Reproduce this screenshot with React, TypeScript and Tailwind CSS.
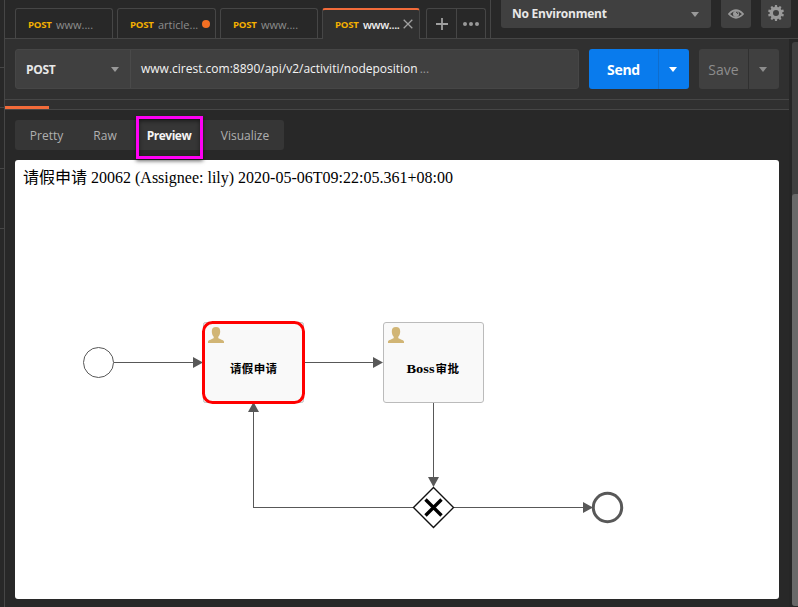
import React from "react";

function Caret({ className = "" }: { className?: string }) {
  return (
    <svg width="8" height="5" viewBox="0 0 8 5" className={`shrink-0 ${className}`}>
      <path d="M0 0H8L4 5Z" fill="currentColor" />
    </svg>
  );
}

function Tab({ label, active, dirty }: { label: string; active?: boolean; dirty?: boolean }) {
  return (
    <div
      className={`relative flex shrink-0 items-center rounded-t-[3px] border border-b-0 border-[#464646] pl-3 ${
        dirty ? "w-[99px]" : "w-[98px]"
      } ${active ? "h-[31px] border-t-2 border-t-[#f26b3a] bg-[#303030]" : "h-[30px] bg-[#282828] pt-[2px]"}`}
    >
      <span className="w-[28px] text-[9.6px] font-bold leading-4 tracking-[-0.25px] text-[#f5b000]">POST</span>
      <span className={`whitespace-nowrap text-[11px] leading-4 ${active ? "font-semibold tracking-[-0.35px] text-[#f0f0f0]" : "text-[#8d8d8d]"}`}>
        {label}
      </span>
      {dirty && <span className="absolute right-[5px] top-[11px] size-2 rounded-full bg-[#f47023]" />}
      {active && (
        <svg width="10" height="10" viewBox="0 0 10 10" className="absolute right-[6px] top-[9px]">
          <path d="M.7.7L9.3 9.3M9.3.7L.7 9.3" stroke="#a0a0a0" strokeWidth="1.3" />
        </svg>
      )}
    </div>
  );
}

function Gear() {
  return (
    <svg width="16" height="16" viewBox="-8 -8 16 16">
      <circle r="4.6" fill="none" stroke="#999" strokeWidth="3.2" />
      {[0, 36, 72, 108, 144, 180, 216, 252, 288, 324].map((a) => (
        <path key={a} d="M-1.4 -5.5L-1 -8H1L1.4 -5.5Z" fill="#999" transform={`rotate(${a})`} />
      ))}
    </svg>
  );
}

function Person({ x, y }: { x: number; y: number }) {
  return (
    <path
      transform={`translate(${x} ${y})`}
      d="M8 0C10.9 0 12.2 1.5 12.2 4.3C12.2 6.9 11.5 8.7 10.3 9.7V11C11.3 12.3 16 12.8 16 14.8V16H0V14.8C0 12.8 4.7 12.3 5.7 11V9.7C4.5 8.7 3.8 6.9 3.8 4.3C3.8 1.5 5.1 0 8 0Z"
      fill="#d1b575"
    />
  );
}

function Diagram() {
  return (
    <svg width="764" height="439" viewBox="15 160 764 439" className="absolute inset-0">
      <g fill="none" stroke="#585858" strokeWidth="1" shapeRendering="crispEdges">
        <path d="M114 362.5H194M304 362.5H374M433.5 403V478M454 507.5H583M413 507.5H253.5V411" />
      </g>
      <g fill="#585858">
        <path d="M193 357V368L203 362.5Z" />
        <path d="M373 357V368L383 362.5Z" />
        <path d="M428 477H439L433.5 487Z" />
        <path d="M583 502V513L593 507.5Z" />
        <path d="M248 412H259L253.5 402Z" />
      </g>
      <circle cx="98.5" cy="362.5" r="15" fill="#fff" stroke="#585858" />
      <circle cx="607.5" cy="507.5" r="14.2" fill="#fff" stroke="#585858" strokeWidth="3" />
      <rect x="203.5" y="322.5" width="100" height="80" rx="2" fill="#f9f9f9" stroke="#bbb" />
      <rect x="203.5" y="322.5" width="100" height="80" rx="9" fill="none" stroke="#f00" strokeWidth="3" />
      <rect x="383.5" y="322.5" width="100" height="80" rx="2.5" fill="#f9f9f9" stroke="#bbb" />
      <Person x={208} y={327} />
      <Person x={388} y={327} />
      <g fill="#000" fontWeight="700" fontSize="11.5" fontFamily="'Liberation Serif','Noto Sans CJK SC',serif">
        <text x="230" y="372.5" textLength="47">请假申请</text>
        <text x="406.5" y="372.5" textLength="28" lengthAdjust="spacingAndGlyphs" fontSize="12">Boss</text>
        <text x="435.5" y="372.5" textLength="23.5">审批</text>
      </g>
      <path d="M433.5 487.5L453.5 507.5L433.5 527.5L413.5 507.5Z" fill="#fff" stroke="#111" strokeWidth="1.4" />
      <path d="M425.5 499.5L441.5 515.5M441.5 499.5L425.5 515.5" stroke="#000" strokeWidth="3.4" />
    </svg>
  );
}

export default function App() {
  return (
    <div className="flex h-[607px] w-[798px] overflow-hidden bg-[#282828] font-['Open_Sans','Noto_Sans',sans-serif]">
      <aside className="flex w-[5px] shrink-0 flex-col border-r border-[#464646] bg-[#282828]">
        <div className="h-[68px] border-b border-[#464646]" />
        <div className="h-10 border-b border-[#464646]" />
        <div className="h-[61px] border-b border-[#464646]" />
        <div className="h-[60px] border-b border-[#464646]" />
      </aside>
      <div className="flex w-[793px] shrink-0 flex-col">
        <header className="flex h-[39px] shrink-0 border-b border-[#464646]">
          <div className="flex h-[39px] w-[486px] shrink-0 items-start border-r border-[#464646] pl-[10px] pt-2">
            <div className="flex">
              <div className="mr-1"><Tab label="www...." /></div>
              <div className="mr-1"><Tab label="article..." dirty /></div>
              <div className="mr-1"><Tab label="www...." /></div>
              <Tab label="www...." active />
            </div>
            <div className="ml-[6px] flex h-[30px] w-[60px] rounded-t-[3px] border border-b-0 border-[#464646] text-[#a0a0a0]">
              <div className="flex w-[30px] items-center justify-center border-r border-[#464646]">
                <svg width="12" height="12" viewBox="0 0 12 12"><path d="M6 0V12M0 6H12" stroke="currentColor" strokeWidth="1.8" /></svg>
              </div>
              <div className="flex flex-1 items-center justify-center gap-[2px]">
                <i className="size-1 rounded-full bg-[#999]" />
                <i className="size-1 rounded-full bg-[#999]" />
                <i className="size-1 rounded-full bg-[#999]" />
              </div>
            </div>
          </div>
          <div className="ml-[10px] flex h-7 gap-[10px] text-[#999]">
            <div className="flex w-[210px] items-center justify-between rounded-b-[3px] bg-[#404040] pl-[11px] pr-3">
              <span className="text-[12px] font-bold leading-4 tracking-[-0.25px] text-[#e8e8e8]">No Environment</span>
              <Caret />
            </div>
            <div className="flex w-[30px] items-center justify-center rounded-b-[3px] bg-[#404040]">
              <svg width="16" height="10" viewBox="0 0 16 10">
                <path d="M.9 5Q8-2.6 15.1 5Q8 12.6.9 5Z" fill="none" stroke="#999" strokeWidth="1.7" />
                <circle cx="8" cy="5" r="3" fill="#999" />
                <path d="M8 3.2A1.8 1.8 0 0 1 9.8 5" fill="none" stroke="#404040" />
              </svg>
            </div>
            <div className="flex w-[30px] items-center justify-center rounded-b-[3px] bg-[#404040] pb-[2px]"><Gear /></div>
          </div>
        </header>
        <div className="flex h-[568px]">
          <main className="w-[784px] shrink-0">
            <div className="flex h-[61px] items-start border-b border-[#464646] bg-[#303030] pl-[10px] pt-[10px]">
              <div className="flex h-10 w-[564px] rounded-[3px] border border-[#464646] bg-[#404040]">
                <div className="flex w-[115px] items-center justify-between border-r border-[#4a4a4a] pl-[10px] pr-[11px] text-[#999]">
                  <span className="pt-px text-[12px] font-bold tracking-[-0.3px] text-[#e8e8e8]">POST</span>
                  <Caret />
                </div>
                <div className="flex items-center whitespace-nowrap pl-[10px] text-[12px] text-[#f4f4f4]">
                  <span>www.cirest.com:8890/api/v2/activiti/nodeposition</span>
                  <span className="ml-[2px] text-[#999]">...</span>
                </div>
              </div>
              <div className="ml-[10px] flex h-10 w-[100px] rounded-[3px] bg-[#097bed] text-white">
                <div className="flex w-[70px] items-center justify-center border-r border-[#0f6dcd] text-[14px] font-bold tracking-[-0.3px]">Send</div>
                <div className="flex flex-1 items-center justify-center pr-[2px]"><Caret /></div>
              </div>
              <div className="ml-[10px] flex h-10 w-[80px] rounded-[3px] bg-[#404040] text-[#8d8d8d]">
                <div className="flex w-[50px] items-center justify-center border-r border-[#303030] text-[14px] font-medium">Save</div>
                <div className="flex flex-1 items-center justify-center pr-[2px]"><Caret /></div>
              </div>
            </div>
            <div className="flex h-[10px] items-end border-b border-[#464646] bg-[#303030]">
              <div className="h-[3px] w-11 bg-[#f26b3a]" />
            </div>
            <div className="px-[10px] pt-[10px]">
              <div className="flex h-[30px] w-[269px] rounded-[3px] bg-[#363636] text-[12px] leading-[32px] text-[#b0b0b0]">
                <div className="w-[63px] text-center">Pretty</div>
                <div className="w-[54px] text-center">Raw</div>
                <div className="relative w-[73px] pl-px text-center font-bold tracking-[-0.5px] text-[#f4f4f4]">
                  Preview
                  <div className="absolute left-[4px] top-[-4px] z-10 h-[43px] w-[67px] border-3 border-[#ff00f5] shadow-[0_2px_4px_rgba(0,0,0,0.6),inset_0_2px_4px_rgba(0,0,0,0.5)]" />
                </div>
                <div className="w-[79px] pl-px text-center">Visualize</div>
              </div>
              <div className="relative mt-[10px] h-[439px] w-[764px] overflow-hidden rounded-[3px] bg-white">
                <Diagram />
                <p className="relative whitespace-pre pl-2 pt-2 font-['Liberation_Serif','Noto_Sans_CJK_SC',serif] text-[16px] leading-[20px] text-black">请假申请 20062 (Assignee: lily) 2020-05-06T09:22:05.361+08:00</p>
              </div>
            </div>
          </main>
          <div className="flex w-[9px] flex-col items-end bg-[#262626] pt-[3px]">
            <div className="flex h-[564px] w-[6px] flex-col justify-end rounded-l-[3px] bg-[#404040]">
              <div className="h-[412px] rounded-l-[3px] bg-[#696969]" />
            </div>
          </div>
        </div>
      </div>
    </div>
  );
}
